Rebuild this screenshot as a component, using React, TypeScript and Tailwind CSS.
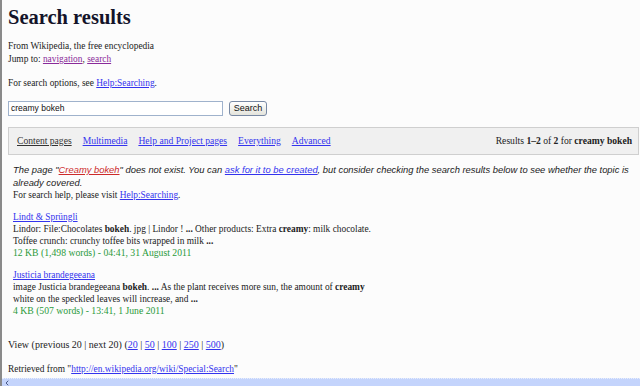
import { ChevronLeft } from "lucide-react"

const serif = { fontFamily: '"Liberation Serif", "Times New Roman", serif' }
const sans = { fontFamily: '"Liberation Sans", Arial, sans-serif' }

function Result({ title, lines, meta }: { title: string; lines: React.ReactNode[]; meta: string }) {
  return (
    <div className="leading-[12px]">
      <a href="#" className="text-[#3333ee] underline">{title}</a>
      {lines.map((l, i) => (
        <div key={i}>{l}</div>
      ))}
      <div className="text-[#2a9a3a] text-[9.7px]">{meta}</div>
    </div>
  )
}

export default function App() {
  return (
    <div className="w-[640px] h-[386px] bg-[#fcfcfc] border-l-2 border-[#8a8a8a] flex flex-col overflow-hidden text-[#222]" style={serif}>
      <div className="flex-1 pl-[6px] overflow-hidden text-[9.4px]">
        <h1 className="mt-[5px] text-[20.5px] leading-[24px] font-bold text-[#14142a]">Search results</h1>

        <div className="mt-[11px] leading-[13px]">
          <div>From Wikipedia, the free encyclopedia</div>
          <div>
            Jump to: <a href="#" className="text-[#8a2a9a] underline">navigation</a>,{" "}
            <a href="#" className="text-[#8a2a9a] underline">search</a>
          </div>
        </div>

        <div className="mt-[11px] leading-[13px]">
          For search options, see <a href="#" className="text-[#3333ee] underline">Help:Searching</a>.
        </div>

        <div className="mt-[11px] flex items-center gap-[6px]">
          <div className="w-[215px] h-[15px] bg-white border border-[#9fb2cc] flex items-center px-[2px] text-[8.5px] text-[#111]" style={sans}>
            creamy bokeh
          </div>
          <button className="w-[38px] h-[15px] rounded-[3px] border border-[#7889a4] bg-gradient-to-b from-[#ffffff] to-[#e4e4dc] text-[9px] leading-[13px] text-[#111]" style={sans}>
            Search
          </button>
        </div>

        <div className="mt-[11px] h-[28px] w-[631px] bg-[#f0f0f0] border border-[#cfcfcf] flex items-center justify-between pl-[8px] pr-[6px] text-[9.6px]">
          <div className="flex gap-[11px]">
            <a href="#" className="text-[#333] underline">Content pages</a>
            <a href="#" className="text-[#3333ee] underline">Multimedia</a>
            <a href="#" className="text-[#3333ee] underline">Help and Project pages</a>
            <a href="#" className="text-[#3333ee] underline">Everything</a>
            <a href="#" className="text-[#3333ee] underline">Advanced</a>
          </div>
          <div>
            Results <b>1–2</b> of <b>2</b> for <b>creamy bokeh</b>
          </div>
        </div>

        <div className="ml-[5px] mt-[8px]">
          <div className="italic leading-[13px] text-[9.4px] w-[625px]" style={sans}>
            The page "<a href="#" className="text-[#cc2a2a] underline">Creamy bokeh</a>" does not exist. You can{" "}
            <a href="#" className="text-[#3333ee] underline">ask for it to be created</a>, but consider checking the search results below to see whether the topic is already covered.
          </div>
          <div className="leading-[12px]">
            For search help, please visit <a href="#" className="text-[#3333ee] underline">Help:Searching</a>.
          </div>

          <div className="mt-[10px]">
            <Result
              title="Lindt & Sprüngli"
              lines={[
                <>Lindor: File:Chocolates <b>bokeh</b>. jpg | Lindor ! <b>...</b> Other products: Extra <b>creamy</b>: milk chocolate.</>,
                <>Toffee crunch: crunchy toffee bits wrapped in milk <b>...</b></>,
              ]}
              meta="12 KB (1,498 words) - 04:41, 31 August 2011"
            />
          </div>
          <div className="mt-[10px]">
            <Result
              title="Justicia brandegeeana"
              lines={[
                <>image Justicia brandegeeana <b>bokeh</b>. <b>...</b> As the plant receives more sun, the amount of <b>creamy</b></>,
                <>white on the speckled leaves will increase, and <b>...</b></>,
              ]}
              meta="4 KB (507 words) - 13:41, 1 June 2011"
            />
          </div>
        </div>

        <div className="mt-[22px] leading-[12px] text-[10px]">
          View (previous 20 | next 20) (<a href="#" className="text-[#3333ee] underline">20</a> |{" "}
          <a href="#" className="text-[#3333ee] underline">50</a> |{" "}
          <a href="#" className="text-[#3333ee] underline">100</a> |{" "}
          <a href="#" className="text-[#3333ee] underline">250</a> |{" "}
          <a href="#" className="text-[#3333ee] underline">500</a>)
        </div>

        <div className="mt-[12px] leading-[12px]">
          Retrieved from "<a href="#" className="text-[#3333ee] underline">http://en.wikipedia.org/wiki/Special:Search</a>"
        </div>
      </div>

      <div className="h-[8px] shrink-0 bg-[#c4d4fc] border-t border-dotted border-[#e8eefc] flex items-center">
        <ChevronLeft size={8} strokeWidth={3} className="text-[#4a5a8a] ml-[1px]" />
      </div>
    </div>
  )
}
